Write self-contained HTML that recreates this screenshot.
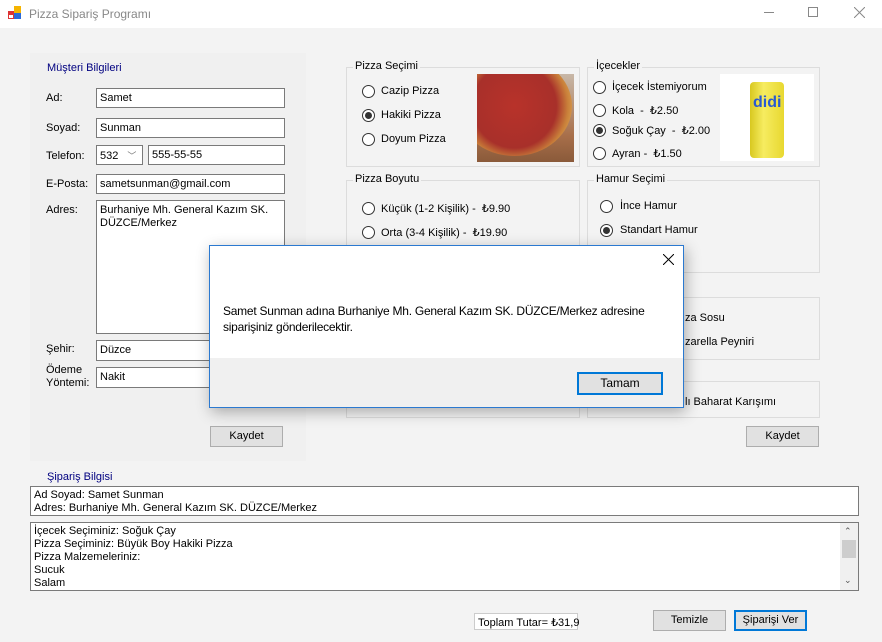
<!DOCTYPE html>
<html><head><meta charset="utf-8"><style>
*{margin:0;padding:0;box-sizing:border-box}
body{width:882px;height:642px;background:#f3f3f3;font-family:"Liberation Sans",sans-serif;font-size:11px;color:#000;position:relative;overflow:hidden}
.a{position:absolute;white-space:nowrap}
.title{left:0;top:0;width:882px;height:28px;background:#fff}
.inp{position:absolute;background:#fff;border:1px solid #7a7a7a;padding:3px 3px;font-size:11px}
.gb{position:absolute;border:1px solid #dcdcdc}
.gt{position:absolute;background:#f3f3f3;padding:0 2px;top:-8px;left:6px}
.rb{position:absolute;width:13px;height:13px;border:1px solid #333;border-radius:50%;background:#fff}
.rb.on::after{content:"";position:absolute;left:2px;top:2px;width:7px;height:7px;border-radius:50%;background:#333}
.btn{position:absolute;background:#e1e1e1;border:1px solid #adadad;text-align:center;line-height:19px}
</style></head><body>
<div class="a title"></div>
<svg class="a" style="left:8px;top:6px" width="14" height="14"><rect x="0" y="5" width="6" height="8" fill="#d33"/><rect x="6" y="0" width="7" height="7" fill="#f5b400"/><rect x="6" y="7" width="7" height="6" fill="#2a6ad8"/><rect x="1" y="9" width="4" height="3" fill="#fff"/></svg>
<div class="a" style="left:29px;top:7px;color:#888;font-size:12px">Pizza Sipariş Programı</div>
<div class="a" style="left:764px;top:12px;width:10px;height:1px;background:#888"></div>
<div class="a" style="left:808px;top:7px;width:10px;height:10px;border:1px solid #888"></div>
<svg class="a" style="left:854px;top:7px" width="11" height="11"><path d="M0 0L11 11M11 0L0 11" stroke="#888"/></svg>

<div class="a" style="left:30px;top:53px;width:276px;height:408px;background:#f0f0f0"></div>
<div class="a" style="left:47px;top:62px;color:#000080">Müşteri Bilgileri</div>
<div class="a" style="left:46px;top:92px">Ad:</div>
<div class="inp" style="left:96px;top:88px;width:189px;height:20px">Samet</div>
<div class="a" style="left:46px;top:122px">Soyad:</div>
<div class="inp" style="left:96px;top:118px;width:189px;height:20px">Sunman</div>
<div class="a" style="left:46px;top:150px">Telefon:</div>
<div class="inp" style="left:96px;top:145px;width:47px;height:20px">532 <span style="color:#777;font-size:9px;margin-left:6px">﹀</span></div>
<div class="inp" style="left:148px;top:145px;width:137px;height:20px">555-55-55</div>
<div class="a" style="left:46px;top:178px">E-Posta:</div>
<div class="inp" style="left:96px;top:174px;width:189px;height:20px">sametsunman@gmail.com</div>
<div class="a" style="left:46px;top:204px">Adres:</div>
<div class="inp" style="left:96px;top:200px;width:189px;height:134px;white-space:normal;line-height:13px">Burhaniye Mh. General Kazım SK. DÜZCE/Merkez</div>
<div class="a" style="left:46px;top:343px">Şehir:</div>
<div class="inp" style="left:96px;top:340px;width:189px;height:21px">Düzce</div>
<div class="a" style="left:46px;top:364px;line-height:13px">Ödeme<br>Yöntemi:</div>
<div class="inp" style="left:96px;top:367px;width:189px;height:21px">Nakit</div>
<div class="btn" style="left:210px;top:426px;width:73px;height:21px">Kaydet</div>

<div class="gb" style="left:346px;top:67px;width:234px;height:100px"><div class="gt">Pizza Seçimi</div></div>
<div class="rb" style="left:362px;top:85px"></div><div class="a" style="left:381px;top:85px">Cazip Pizza</div>
<div class="rb on" style="left:362px;top:109px"></div><div class="a" style="left:381px;top:109px">Hakiki Pizza</div>
<div class="rb" style="left:362px;top:133px"></div><div class="a" style="left:381px;top:133px">Doyum Pizza</div>
<div class="a" style="left:477px;top:74px;width:97px;height:88px;background:linear-gradient(#c8b8a8,#a86f4a 70%,#8a5a3a);overflow:hidden"><div style="position:absolute;left:-20px;top:-18px;width:115px;height:100px;border-radius:50%;background:radial-gradient(circle,#b8322a 0,#a8302a 55%,#c9803a 70%,#d9a050 80%,#a86a3a 100%)"></div></div>

<div class="gb" style="left:587px;top:67px;width:233px;height:100px"><div class="gt">İçecekler</div></div>
<div class="rb" style="left:593px;top:81px"></div><div class="a" style="left:612px;top:81px">İçecek İstemiyorum</div>
<div class="rb" style="left:593px;top:104px"></div><div class="a" style="left:612px;top:104px">Kola &nbsp;- &nbsp;₺2.50</div>
<div class="rb on" style="left:593px;top:124px"></div><div class="a" style="left:612px;top:124px">Soğuk Çay &nbsp;- &nbsp;₺2.00</div>
<div class="rb" style="left:593px;top:147px"></div><div class="a" style="left:612px;top:147px">Ayran - &nbsp;₺1.50</div>
<div class="a" style="left:720px;top:74px;width:94px;height:87px;background:#fff"><div style="position:absolute;left:30px;top:8px;width:34px;height:76px;border-radius:4px;background:linear-gradient(90deg,#d8c820,#f6ec60 40%,#e8d830)"></div><div style="position:absolute;left:33px;top:20px;font:bold 16px 'Liberation Sans';color:#2a5ad0">didi</div></div>

<div class="gb" style="left:346px;top:180px;width:234px;height:238px"><div class="gt">Pizza Boyutu</div></div>
<div class="rb" style="left:362px;top:202px"></div><div class="a" style="left:381px;top:202px">Küçük (1-2 Kişilik) - &nbsp;₺9.90</div>
<div class="rb" style="left:362px;top:226px"></div><div class="a" style="left:381px;top:226px">Orta (3-4 Kişilik) - &nbsp;₺19.90</div>

<div class="gb" style="left:587px;top:180px;width:233px;height:93px"><div class="gt">Hamur Seçimi</div></div>
<div class="rb" style="left:600px;top:200px"></div><div class="a" style="left:620px;top:200px">İnce Hamur</div>
<div class="rb on" style="left:600px;top:224px"></div><div class="a" style="left:620px;top:224px">Standart Hamur</div>

<div class="gb" style="left:587px;top:297px;width:233px;height:63px"></div>
<div class="a" style="left:685px;top:312px">za Sosu</div>
<div class="a" style="left:685px;top:336px">zarella Peyniri</div>
<div class="gb" style="left:587px;top:381px;width:233px;height:37px"></div>
<div class="a" style="left:685px;top:396px">lı Baharat Karışımı</div>
<div class="btn" style="left:746px;top:426px;width:73px;height:21px">Kaydet</div>

<div class="a" style="left:47px;top:471px;color:#000080">Şipariş Bilgisi</div>
<div class="inp" style="left:30px;top:486px;width:829px;height:30px;padding:2px 3px;line-height:13px">Ad Soyad: Samet Sunman<br>Adres: Burhaniye Mh. General Kazım SK. DÜZCE/Merkez</div>
<div class="inp" style="left:30px;top:522px;width:829px;height:69px;padding:2px 3px;line-height:13px;overflow:hidden">İçecek Seçiminiz: Soğuk Çay<br>Pizza Seçiminiz: Büyük Boy Hakiki Pizza<br>Pizza Malzemeleriniz:<br>Sucuk<br>Salam</div>
<div class="a" style="left:840px;top:523px;width:18px;height:67px;background:#f0f0f0"></div>
<div class="a" style="left:842px;top:540px;width:14px;height:18px;background:#cdcdcd"></div>
<div class="a" style="left:844px;top:526px;font-size:9px;color:#555">⌃</div>
<div class="a" style="left:844px;top:575px;font-size:9px;color:#555">⌄</div>

<div class="a" style="left:474px;top:613px;width:104px;height:17px;background:#fff;border:1px solid #ccc;padding:2px 3px">Toplam Tutar= ₺31,9</div>
<div class="btn" style="left:653px;top:610px;width:73px;height:21px">Temizle</div>
<div class="btn" style="left:734px;top:610px;width:73px;height:21px;border:2px solid #0078d7;line-height:17px">Şiparişi Ver</div>

<div class="a" style="left:209px;top:245px;width:475px;height:163px;background:#fff;border:1px solid #2b79d0;box-shadow:2px 4px 14px rgba(0,0,0,.3)">
<svg style="position:absolute;left:453px;top:8px" width="11" height="11"><path d="M0 0L11 11M11 0L0 11" stroke="#000"/></svg>
<div class="a" style="left:13px;top:57px;font-size:12px;letter-spacing:-0.25px;line-height:16px;white-space:normal;width:455px">Samet Sunman adına Burhaniye Mh. General Kazım SK. DÜZCE/Merkez adresine siparişiniz gönderilecektir.</div>
<div class="a" style="left:0;top:112px;width:473px;height:49px;background:#f0f0f0"></div>
<div class="btn" style="left:367px;top:126px;width:86px;height:23px;border:2px solid #0078d7;background:#e1e1e1;line-height:19px;font-size:12px">Tamam</div>
</div>
</body></html>
